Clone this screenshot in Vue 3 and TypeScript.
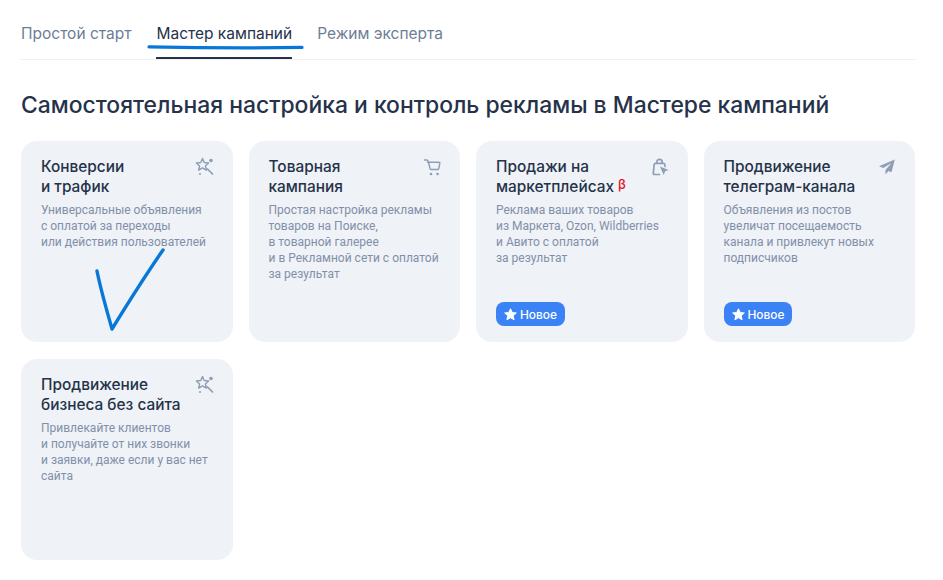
<script setup lang="ts">
type IconName = 'wand' | 'cart' | 'bag' | 'plane'

interface Campaign {
  title: string[]
  text: string[]
  icon: IconName
  beta?: boolean
  isNew?: boolean
}

const tabs = ['Простой старт', 'Мастер кампаний', 'Режим эксперта']
const activeTab = 'Мастер кампаний'

const campaigns: Campaign[] = [
  {
    title: ['Конверсии', 'и трафик'],
    text: ['Универсальные объявления', 'с оплатой за переходы', 'или действия пользователей'],
    icon: 'wand',
  },
  {
    title: ['Товарная', 'кампания'],
    text: ['Простая настройка рекламы', 'товаров на Поиске,', 'в товарной галерее', 'и в Рекламной сети с оплатой', 'за результат'],
    icon: 'cart',
  },
  {
    title: ['Продажи на', 'маркетплейсах'],
    text: ['Реклама ваших товаров', 'из Маркета, Ozon, Wildberries', 'и Авито с оплатой', 'за результат'],
    icon: 'bag',
    beta: true,
    isNew: true,
  },
  {
    title: ['Продвижение', 'телеграм-канала'],
    text: ['Объявления из постов', 'увеличат посещаемость', 'канала и привлекут новых', 'подписчиков'],
    icon: 'plane',
    isNew: true,
  },
  {
    title: ['Продвижение', 'бизнеса без сайта'],
    text: ['Привлекайте клиентов', 'и получайте от них звонки', 'и заявки, даже если у вас нет', 'сайта'],
    icon: 'wand',
  },
]
</script>

<template>
  <div class="page">
    <nav class="tabs">
      <span v-for="tab in tabs" :key="tab" class="tab" :class="{ active: tab === activeTab }">
        {{ tab }}
        <svg v-if="tab === activeTab" class="marker" width="160" height="8" viewBox="0 0 160 8">
          <path d="M2 3.8C40 4.6 115 5 155 4.4" fill="none" stroke="#0778d8" stroke-width="3.2" stroke-linecap="round" />
        </svg>
      </span>
    </nav>

    <h1 class="heading">Самостоятельная настройка и контроль рекламы в Мастере кампаний</h1>

    <div class="grid">
      <article v-for="(item, index) in campaigns" :key="index" class="card">
        <header class="card-head">
          <h2 class="card-title">
            <span v-for="line in item.title" :key="line" class="line">
              {{ line }}<sup v-if="item.beta && line === 'маркетплейсах'" class="beta">β</sup>
            </span>
          </h2>
          <svg class="icon" width="20" height="20" viewBox="0 0 20 20">
            <template v-if="item.icon === 'wand'">
              <path d="M7.5 1.5l1.7 4 4.4.5-3.2 2.9 1 4.3-3.9-2.3-3.9 2.3 1-4.3L1.4 6l4.4-.5z" fill="none" stroke="#8f9db5" stroke-width="1.4" stroke-linejoin="round" />
              <path d="M12.5 12l5 5" stroke="#8f9db5" stroke-width="1.7" stroke-linecap="round" />
              <circle cx="16" cy="3.5" r="1.8" fill="#8f9db5" />
              <circle cx="5" cy="17" r="1" fill="#8f9db5" />
            </template>
            <template v-else-if="item.icon === 'cart'">
              <path d="M2.5 3h2.2c.8 0 1.2.4 1.5 1.2L8 11.5c.2.7.6 1 1.3 1h6.2c.7 0 1.1-.3 1.3-1l1-5.2c.1-.7-.2-1-.9-1H5.5" fill="none" stroke="#8f9db5" stroke-width="1.4" stroke-linecap="round" stroke-linejoin="round" />
              <circle cx="9" cy="17" r="1.3" fill="#8f9db5" />
              <circle cx="15.5" cy="17" r="1.3" fill="#8f9db5" />
            </template>
            <template v-else-if="item.icon === 'bag'">
              <path d="M9.5 17.5H4.6c-.9 0-1.4-.6-1.3-1.4l.9-8.6c.1-.8.6-1.2 1.3-1.2h8c.7 0 1.2.4 1.3 1.2l.2 2" fill="none" stroke="#8f9db5" stroke-width="1.7" stroke-linecap="round" />
              <path d="M6.8 6.5V5a2.7 2.7 0 0 1 5.4 0v1.5" fill="none" stroke="#8f9db5" stroke-width="1.7" />
              <path d="M10 9.5l8.5 3.4-3.4 1.4-1.4 3.7z" fill="#8f9db5" />
            </template>
            <template v-else>
              <path d="M17.8 2.5L2 9.2l4.3 1.8L14.5 6l-6 6.9v4.6l3-3.4 3 1.2z" fill="#8f9db5" />
            </template>
          </svg>
        </header>
        <p class="card-text">
          <span v-for="line in item.text" :key="line" class="line">{{ line }}</span>
        </p>
        <span v-if="item.isNew" class="badge">
          <svg width="13" height="13" viewBox="0 0 14 14">
            <path d="M7 .8l1.9 4 4.4.5-3.3 3 .9 4.4L7 10.5l-3.9 2.2.9-4.4-3.3-3 4.4-.5z" fill="#fff" stroke="#fff" stroke-linejoin="round" />
          </svg>
          Новое
        </span>
        <svg v-if="index === 0" class="check" width="80" height="90" viewBox="0 0 80 90">
          <path d="M2 26C6 46 12 66 17 84C33 58 50 31 68 5" fill="none" stroke="#0778d8" stroke-width="3.4" stroke-linecap="round" stroke-linejoin="round" />
        </svg>
      </article>
    </div>
  </div>
</template>

<style scoped>
.page {
  box-sizing: border-box;
  width: 943px;
  height: 580px;
  padding: 0 28px 0 21px;
  overflow: hidden;
  background: #fff;
  font-family: Inter, "Noto Sans", sans-serif;
}

.tabs {
  display: flex;
  gap: 25px;
  height: 60px;
  border-bottom: 1px solid #edf1f7;
  box-sizing: border-box;
}

.tab {
  position: relative;
  height: 59px;
  padding-top: 24px;
  box-sizing: border-box;
  color: #6e7d96;
  font-size: 15.5px;
  line-height: 20px;
  white-space: nowrap;
}

.tab.active {
  color: #253249;
  box-shadow: inset 0 -2px 0 #253249;
}

.marker {
  position: absolute;
  left: -9px;
  top: 43px;
}

.heading {
  margin: 29px 0 0;
  color: #253249;
  font-size: 22.9px;
  font-weight: 500;
  line-height: 32px;
  white-space: nowrap;
}

.grid {
  display: grid;
  grid-template-columns: repeat(4, 211.5px);
  grid-auto-rows: 201px;
  gap: 17px 16px;
  margin-top: 20px;
}

.card {
  position: relative;
  display: flex;
  flex-direction: column;
  box-sizing: border-box;
  padding: 16px 20px;
  border-radius: 16px;
  background: #eff2f7;
}

.card-head {
  display: flex;
  justify-content: space-between;
  align-items: flex-start;
}

.card-title {
  margin: 0;
  color: #253249;
  font-size: 15.4px;
  font-weight: 500;
  line-height: 20px;
}

.line {
  display: block;
  white-space: nowrap;
}

.beta {
  margin-left: 4px;
  color: #e01020;
  font-size: 13px;
  line-height: 0;
  font-weight: 500;
  vertical-align: 3px;
}

.icon {
  flex: none;
  margin: 0 -2px 0 0;
}

.card-text {
  margin: 5px 0 0;
  color: #8190a9;
  font-family: Roboto, "Noto Sans", sans-serif;
  font-size: 12px;
  line-height: 16px;
}

.badge {
  display: inline-flex;
  align-items: center;
  gap: 3px;
  align-self: flex-start;
  box-sizing: border-box;
  height: 24px;
  margin-top: auto;
  padding: 0 8px;
  border-radius: 8px;
  background: #3b82f6;
  color: #fff;
  font-size: 11.9px;
  font-weight: 500;
}

.check {
  position: absolute;
  left: 74px;
  top: 104px;
}
</style>
